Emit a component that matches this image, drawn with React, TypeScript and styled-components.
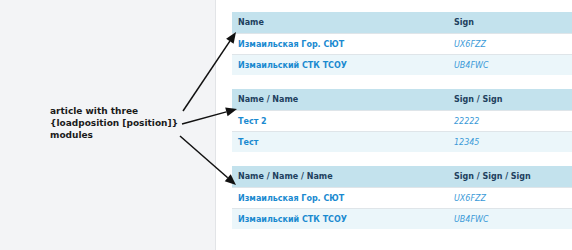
import React from "react";
import styled, { createGlobalStyle } from "styled-components";

const Global = createGlobalStyle`
  html, body { margin: 0; padding: 0; background: #ffffff; }
  body { font-family: "DejaVu Sans", Verdana, sans-serif; }
  #root { width: 572px; height: 250px; overflow: hidden; }
`;

const Page = styled.div`
  position: relative;
  display: flex;
  width: 572px;
  height: 250px;
  overflow: hidden;
  background: #ffffff;
`;

const Sidebar = styled.aside`
  flex: 0 0 216px;
  box-sizing: border-box;
  background: #f3f4f6;
  border-right: 1px solid #e2e4e7;
  padding: 105px 0 0 50px;
`;

const Note = styled.p`
  margin: 0;
  font-family: "DejaVu Sans", Verdana, sans-serif;
  font-weight: bold;
  font-size: 9px;
  line-height: 12px;
  color: #1a1a1a;
`;

const Content = styled.main`
  flex: 1 1 auto;
  display: flex;
  flex-direction: column;
  gap: 14px;
  padding: 12px 0 0 16px;
  min-width: 0;
`;

const Table = styled.table`
  width: 345px;
  border-collapse: collapse;
  table-layout: fixed;
  font-family: "DejaVu Sans", Verdana, sans-serif;
  font-size: 8px;
`;

const NameCol = styled.col`
  width: 216px;
`;

const HeadCell = styled.th`
  height: 21px;
  padding: 0 0 0 6px;
  text-align: left;
  font-weight: bold;
  color: #213f5e;
  background: #c3e2ed;
  white-space: nowrap;
`;

const Row = styled.tr<{ $alt?: boolean }>`
  background: ${(p) => (p.$alt ? "#ebf6fa" : "#ffffff")};
  border-top: 1px solid #dfe5e9;
`;

const NameCell = styled.td`
  height: 20px;
  padding: 0 0 0 6px;
  font-weight: bold;
  color: #1a8ad0;
  white-space: nowrap;
`;

const SignCell = styled.td`
  height: 20px;
  padding: 0 0 0 6px;
  font-style: italic;
  color: #3b9ad8;
  white-space: nowrap;
`;

const Arrows = styled.svg`
  position: absolute;
  left: 0;
  top: 0;
  pointer-events: none;
`;

type Item = { name: string; sign: string };

const modules: { head: [string, string]; rows: Item[] }[] = [
  {
    head: ["Name", "Sign"],
    rows: [
      { name: "Измаильская Гор. СЮТ", sign: "UX6FZZ" },
      { name: "Измаильский СТК ТСОУ", sign: "UB4FWC" },
    ],
  },
  {
    head: ["Name / Name", "Sign / Sign"],
    rows: [
      { name: "Тест 2", sign: "22222" },
      { name: "Тест", sign: "12345" },
    ],
  },
  {
    head: ["Name / Name / Name", "Sign / Sign / Sign"],
    rows: [
      { name: "Измаильская Гор. СЮТ", sign: "UX6FZZ" },
      { name: "Измаильский СТК ТСОУ", sign: "UB4FWC" },
    ],
  },
];

function Arrow({ x1, y1, x2, y2 }: { x1: number; y1: number; x2: number; y2: number }) {
  const dx = x2 - x1;
  const dy = y2 - y1;
  const len = Math.hypot(dx, dy);
  const ux = dx / len;
  const uy = dy / len;
  const hl = 11;
  const hw = 4.5;
  const bx = x2 - ux * hl;
  const by = y2 - uy * hl;
  const px = -uy;
  const py = ux;
  return (
    <g>
      <line x1={x1} y1={y1} x2={bx} y2={by} stroke="#111" strokeWidth={1.5} />
      <polygon
        points={`${x2},${y2} ${bx + px * hw},${by + py * hw} ${bx - px * hw},${by - py * hw}`}
        fill="#111"
      />
    </g>
  );
}

export default function App() {
  return (
    <>
      <Global />
      <Page>
        <Sidebar>
          <Note>
            article with three
            <br />
            {"{loadposition [position]}"}
            <br />
            modules
          </Note>
        </Sidebar>
        <Content>
          {modules.map((m, i) => (
            <Table key={i}>
              <colgroup>
                <NameCol />
                <col />
              </colgroup>
              <thead>
                <tr>
                  <HeadCell>{m.head[0]}</HeadCell>
                  <HeadCell>{m.head[1]}</HeadCell>
                </tr>
              </thead>
              <tbody>
                {m.rows.map((r, j) => (
                  <Row key={j} $alt={j % 2 === 1}>
                    <NameCell>{r.name}</NameCell>
                    <SignCell>{r.sign}</SignCell>
                  </Row>
                ))}
              </tbody>
            </Table>
          ))}
        </Content>
        <Arrows width={572} height={250} viewBox="0 0 572 250">
          <Arrow x1={183} y1={111} x2={236} y2={32} />
          <Arrow x1={182} y1={124} x2={237} y2={109} />
          <Arrow x1={180} y1={136} x2={236} y2={185} />
        </Arrows>
      </Page>
    </>
  );
}
